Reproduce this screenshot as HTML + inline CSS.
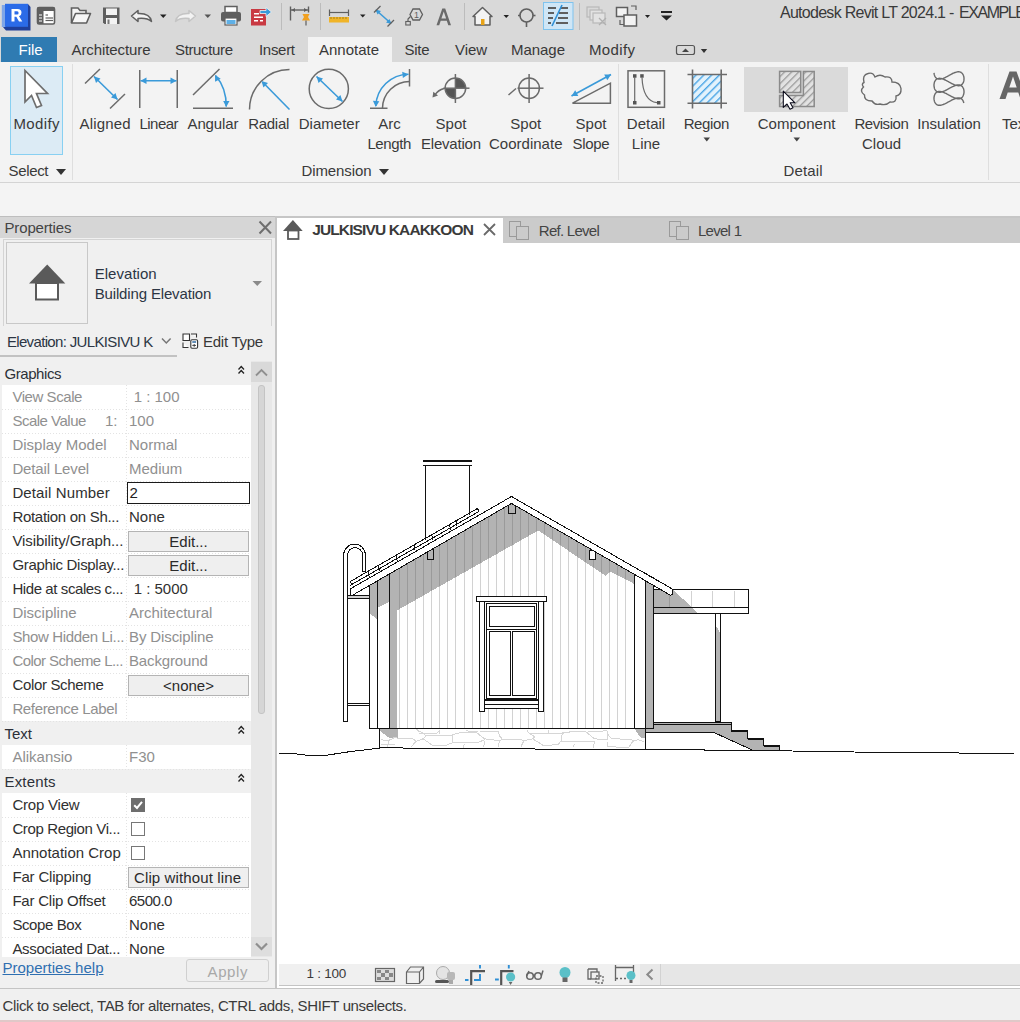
<!DOCTYPE html>
<html><head><meta charset="utf-8">
<style>
*{margin:0;padding:0;box-sizing:border-box}
html,body{width:1020px;height:1022px;overflow:hidden;background:#f0f0f0;font-family:"Liberation Sans",sans-serif;color:#222}
.a{position:absolute}
.t{position:absolute;white-space:nowrap;line-height:1}
svg{position:absolute;overflow:visible}
</style></head><body>
<div class="a" style="left:0px;top:0px;width:1020px;height:62px;background:#d9d9d9;"></div>
<div class="a" style="left:0px;top:62px;width:1020px;height:120px;background:#f3f3f3;"></div>
<div class="a" style="left:0px;top:182px;width:1020px;height:1px;background:#d4d4d4;"></div>
<div class="a" style="left:0px;top:183px;width:1020px;height:33px;background:#f4f4f4;"></div>
<div class="a" style="left:1px;top:37px;width:56px;height:25px;background:#2f7bb2;"></div>
<div class="t" style="left:18.5px;top:42.30px;font-size:15px;color:#fff;">File</div>
<div class="a" style="left:308px;top:37px;width:84px;height:25px;background:#f3f3f3;"></div>
<div class="t" style="left:71.5px;top:42.30px;font-size:15px;color:#383838;letter-spacing:-0.095px;">Architecture</div>
<div class="t" style="left:175px;top:42.30px;font-size:15px;color:#383838;letter-spacing:-0.359px;">Structure</div>
<div class="t" style="left:259px;top:42.30px;font-size:15px;color:#383838;letter-spacing:-0.306px;">Insert</div>
<div class="t" style="left:319px;top:42.30px;font-size:15px;color:#383838;">Annotate</div>
<div class="t" style="left:404.5px;top:42.30px;font-size:15px;color:#383838;letter-spacing:-0.281px;">Site</div>
<div class="t" style="left:455px;top:42.30px;font-size:15px;color:#383838;letter-spacing:-0.078px;">View</div>
<div class="t" style="left:511px;top:42.30px;font-size:15px;color:#383838;letter-spacing:-0.044px;">Manage</div>
<div class="t" style="left:589px;top:42.30px;font-size:15px;color:#383838;letter-spacing:0.362px;">Modify</div>
<div class="t" style="left:780px;top:4.95px;font-size:16px;color:#3a3a3a;letter-spacing:-0.723px;">Autodesk Revit LT 2024.1 -</div>
<div class="t" style="left:959px;top:4.95px;font-size:16px;color:#3a3a3a;letter-spacing:-1.432px;">EXAMPLE</div>
<svg style="left:0;top:0" width="1020" height="62"><rect x="676.5" y="45.5" width="18" height="9" rx="2" fill="none" stroke="#555" stroke-width="1.2"/><path d="M682 52 L685.5 48.5 L689 52Z" fill="#444"/><path d="M700.8 49 L707.2 49 L704 53Z" fill="#333"/></svg>
<div class="a" style="left:72px;top:64px;width:1px;height:116px;background:#dedede;"></div>
<div class="a" style="left:618px;top:64px;width:1px;height:116px;background:#dedede;"></div>
<div class="a" style="left:988px;top:64px;width:1px;height:116px;background:#dedede;"></div>
<div class="a" style="left:10px;top:66px;width:53px;height:89px;background:#dcebf5;border:1px solid #88d0f2;"></div>
<div class="t" style="left:13.5px;top:115.99px;font-size:15px;color:#3a3a3a;letter-spacing:0.362px;">Modify</div>
<div class="t" style="left:8.5px;top:163.09px;font-size:15px;color:#3a3a3a;letter-spacing:-0.338px;">Select</div>
<div class="t" style="left:301.5px;top:163.09px;font-size:15px;color:#3a3a3a;letter-spacing:-0.107px;">Dimension</div>
<div class="t" style="left:783.5px;top:163.09px;font-size:15px;color:#3a3a3a;letter-spacing:0.131px;">Detail</div>
<svg style="left:0;top:0" width="1020" height="216"><path d="M56 169 L66 169 L61 175Z" fill="#333"/><path d="M379 169 L389 169 L384 175Z" fill="#333"/><path d="M703.5 137.5 L710 137.5 L706.75 141.5Z" fill="#444"/><path d="M793.5 137.5 L800 137.5 L796.75 141.5Z" fill="#444"/></svg>
<div class="t" style="left:79.5px;top:115.99px;font-size:15px;color:#3a3a3a;letter-spacing:0.161px;">Aligned</div>
<div class="t" style="left:139.5px;top:115.99px;font-size:15px;color:#3a3a3a;letter-spacing:-0.541px;">Linear</div>
<div class="t" style="left:187.5px;top:115.99px;font-size:15px;color:#3a3a3a;letter-spacing:-0.117px;">Angular</div>
<div class="t" style="left:248.25px;top:115.99px;font-size:15px;color:#3a3a3a;letter-spacing:-0.303px;">Radial</div>
<div class="t" style="left:298.7px;top:115.99px;font-size:15px;color:#3a3a3a;letter-spacing:0.020px;">Diameter</div>
<div class="t" style="left:378.15px;top:115.99px;font-size:15px;color:#3a3a3a;">Arc</div>
<div class="t" style="left:367.4px;top:135.99px;font-size:15px;color:#3a3a3a;letter-spacing:-0.378px;">Length</div>
<div class="t" style="left:435.5703125px;top:115.99px;font-size:15px;color:#3a3a3a;">Spot</div>
<div class="t" style="left:421.0px;top:135.99px;font-size:15px;color:#3a3a3a;letter-spacing:-0.213px;">Elevation</div>
<div class="t" style="left:510.3203125px;top:115.99px;font-size:15px;color:#3a3a3a;">Spot</div>
<div class="t" style="left:489.0px;top:135.99px;font-size:15px;color:#3a3a3a;letter-spacing:0.012px;">Coordinate</div>
<div class="t" style="left:575.5703125px;top:115.99px;font-size:15px;color:#3a3a3a;">Spot</div>
<div class="t" style="left:572.5px;top:135.99px;font-size:15px;color:#3a3a3a;letter-spacing:-0.340px;">Slope</div>
<div class="t" style="left:631.8203125px;top:135.99px;font-size:15px;color:#3a3a3a;">Line</div>
<div class="t" style="left:626.85px;top:115.99px;font-size:15px;color:#3a3a3a;letter-spacing:-0.009px;">Detail</div>
<div class="t" style="left:683.65px;top:115.99px;font-size:15px;color:#3a3a3a;letter-spacing:-0.366px;">Region</div>
<div class="t" style="left:757.75px;top:115.99px;font-size:15px;color:#3a3a3a;letter-spacing:0.017px;">Component</div>
<div class="t" style="left:862.00625px;top:135.99px;font-size:15px;color:#3a3a3a;">Cloud</div>
<div class="t" style="left:854.45px;top:115.99px;font-size:15px;color:#3a3a3a;letter-spacing:-0.459px;">Revision</div>
<div class="t" style="left:917.15px;top:115.99px;font-size:15px;color:#3a3a3a;letter-spacing:-0.058px;">Insulation</div>
<svg style="left:0;top:0" width="1020" height="216"><path d="M25 70.5 L25 102 L31.5 95.5 L36.5 107.5 L41.5 105.5 L36.5 93.5 L47.5 93.5Z" fill="#fff" stroke="#6e6e6e" stroke-width="1.7" stroke-linejoin="miter"/><line x1="85" y1="83.5" x2="100" y2="69" stroke="#6b6b6b" stroke-width="1.5"/><line x1="110" y1="108.5" x2="125" y2="94" stroke="#6b6b6b" stroke-width="1.5"/><line x1="94" y1="76.5" x2="117.5" y2="99.5" stroke="#3a9ad9" stroke-width="1.6"/><path d="M117.5 99.5 L111.0 97.6 L115.5 93.0Z" fill="#3a9ad9"/><path d="M94.0 76.5 L100.5 78.4 L96.0 83.0Z" fill="#3a9ad9"/><line x1="139.75" y1="70" x2="139.75" y2="108" stroke="#6b6b6b" stroke-width="1.5"/><line x1="177.25" y1="70" x2="177.25" y2="108" stroke="#6b6b6b" stroke-width="1.5"/><line x1="140.5" y1="80.8" x2="176.5" y2="80.8" stroke="#3a9ad9" stroke-width="1.6"/><path d="M176.5 80.8 L170.5 84.0 L170.5 77.6Z" fill="#3a9ad9"/><path d="M140.5 80.8 L146.5 77.6 L146.5 84.0Z" fill="#3a9ad9"/><line x1="193" y1="95" x2="219.5" y2="69" stroke="#6b6b6b" stroke-width="1.5"/><line x1="193" y1="108.25" x2="233" y2="108.25" stroke="#6b6b6b" stroke-width="1.5"/><path d="M215.5 75.5 Q226.5 88 226.2 106.5" fill="none" stroke="#3a9ad9" stroke-width="1.6"/><path d="M215.0 75.0 L220.7 78.7 L215.1 81.8Z" fill="#3a9ad9"/><path d="M226.2 107.0 L223.2 100.9 L229.5 101.1Z" fill="#3a9ad9"/><path d="M249.5 109.5 A40 40 0 0 1 289.5 69.5" fill="none" stroke="#6b6b6b" stroke-width="1.5"/><line x1="289.5" y1="109.5" x2="263" y2="82.5" stroke="#3a9ad9" stroke-width="1.6"/><path d="M261.5 81.0 L268.0 83.0 L263.4 87.5Z" fill="#3a9ad9"/><circle cx="328.8" cy="88.8" r="19.6" fill="none" stroke="#6b6b6b" stroke-width="1.5"/><line x1="316.5" y1="76.5" x2="342.5" y2="101.5" stroke="#3a9ad9" stroke-width="1.6"/><path d="M342.5 101.5 L336.0 99.6 L340.4 95.0Z" fill="#3a9ad9"/><path d="M316.5 76.5 L323.0 78.4 L318.6 83.0Z" fill="#3a9ad9"/><line x1="409.5" y1="69" x2="409.5" y2="86.5" stroke="#6b6b6b" stroke-width="1.5"/><line x1="370" y1="108.25" x2="387.5" y2="108.25" stroke="#6b6b6b" stroke-width="1.5"/><path d="M382.5 108 A27 27 0 0 1 409.5 81.5" fill="none" stroke="#6b6b6b" stroke-width="1.5"/><path d="M375.8 106 A33 33 0 0 1 408.5 74.2" fill="none" stroke="#3a9ad9" stroke-width="1.6"/><path d="M375.8 107.0 L372.9 100.8 L379.3 101.2Z" fill="#3a9ad9"/><path d="M408.5 74.2 L402.9 78.0 L402.2 71.7Z" fill="#3a9ad9"/><path d="M455.4 88.2 L455.4 77.9 A10.3 10.3 0 0 1 465.7 88.2Z" fill="#555"/><path d="M455.4 88.2 L455.4 98.5 A10.3 10.3 0 0 1 445.09999999999997 88.2Z" fill="#555"/><circle cx="455.4" cy="88.2" r="10.3" fill="none" stroke="#6b6b6b" stroke-width="1.5"/><line x1="455.4" y1="74" x2="455.4" y2="103" stroke="#6b6b6b" stroke-width="1.5"/><line x1="443.5" y1="88.2" x2="469.5" y2="88.2" stroke="#6b6b6b" stroke-width="1.5"/><path d="M444 88.5 Q438 90 434.5 95.5" fill="none" stroke="#6b6b6b" stroke-width="1.5"/><path d="M432.5 97.5 L433.3 91.7 L438.0 95.5Z" fill="#6b6b6b"/><circle cx="529.1" cy="88.2" r="10.3" fill="none" stroke="#6b6b6b" stroke-width="1.5"/><line x1="529.1" y1="74" x2="529.1" y2="103" stroke="#6b6b6b" stroke-width="1.5"/><line x1="517.5" y1="88.2" x2="543.5" y2="88.2" stroke="#6b6b6b" stroke-width="1.5"/><line x1="508.5" y1="95" x2="516" y2="88.5" stroke="#6b6b6b" stroke-width="1.5"/><path d="M572.5 103.2 L610.4 103.2 L610.4 83.2Z" fill="none" stroke="#6b6b6b" stroke-width="1.5" stroke-linejoin="miter"/><line x1="571.5" y1="96" x2="611" y2="74.5" stroke="#3a9ad9" stroke-width="1.6"/><path d="M611.0 74.5 L607.3 80.2 L604.2 74.6Z" fill="#3a9ad9"/><path d="M571.5 96.0 L575.2 90.3 L578.3 95.9Z" fill="#3a9ad9"/><rect x="628" y="70.8" width="36.5" height="36.5" fill="none" stroke="#6b6b6b" stroke-width="1.5"/><g fill="#555"><rect x="633" y="74.2" width="3.5" height="3.5"/><rect x="640.2" y="74.2" width="3.5" height="3.5"/><rect x="633" y="101" width="3.5" height="3.5"/><rect x="657" y="101" width="3.5" height="3.5"/></g><line x1="634.7" y1="77" x2="634.7" y2="101" stroke="#6b6b6b" stroke-width="1.2"/><path d="M642 77.5 Q643 101 657 102.7" fill="none" stroke="#6b6b6b" stroke-width="1.2"/><defs><pattern id="hb" width="5.5" height="5.5" patternUnits="userSpaceOnUse" patternTransform="rotate(45)"><rect width="5.5" height="5.5" fill="#e2f2fc"/><rect width="1.4" height="5.5" fill="#4aa6e6"/></pattern><pattern id="hg" width="5" height="5" patternUnits="userSpaceOnUse" patternTransform="rotate(45)"><rect width="5" height="5" fill="#e2e2e2"/><rect width="1.3" height="5" fill="#9a9a9a"/></pattern></defs><rect x="692.5" y="74.5" width="28.7" height="28.7" fill="url(#hb)"/><g stroke="#6b6b6b" stroke-width="1.6"><line x1="692.5" y1="69.5" x2="692.5" y2="108.5"/><line x1="721.2" y1="69.5" x2="721.2" y2="108.5"/><line x1="687.5" y1="74.5" x2="727" y2="74.5"/><line x1="687.5" y1="103.2" x2="727" y2="103.2"/></g><rect x="744" y="67" width="104" height="45" fill="#dadada"/><path d="M803.4 71.4 L814.2 71.4 L814.2 106.4 L779.6 106.4 L779.6 95.4 L803.4 95.4Z" fill="url(#hg)" stroke="#8a8a8a" stroke-width="1.5"/><rect x="779.6" y="71.4" width="21.1" height="21.1" fill="url(#hg)" stroke="#8a8a8a" stroke-width="1.5"/><path d="M783.3 91.2 L783.3 107.4 L787 104 L790 109.3 L793 107.8 L790.2 102.8 L795 102.8Z" fill="#fff" stroke="#0a0a1a" stroke-width="1.1" stroke-linejoin="round"/><path d="M864 82.5 Q862 75 868 73.5 Q873 72 875 77 Q880 73.5 885 77 Q892 76 892 82 Q900 82 901 88.5 Q901.5 95 896 96 Q897 103 890 102 Q886 106 880 104 Q875 105.5 872 101 Q864 101 864.5 95 Q859 91 863.5 87 Q861 84 864 82.5Z" fill="none" stroke="#6b6b6b" stroke-width="1.4"/><polyline points="934.0,72.8 934.1,73.4 934.1,73.9 934.2,74.4 934.4,74.9 934.5,75.4 934.7,75.9 934.9,76.3 935.2,76.7 935.4,77.1 935.7,77.5 936.0,77.8 936.3,78.1 936.7,78.4 937.1,78.6 937.5,78.8 937.9,78.9 938.4,79.0 938.8,79.1 939.3,79.1 939.8,79.1 940.3,79.1 940.9,79.0 941.4,78.9 942.0,78.8 942.6,78.6 943.1,78.4 943.7,78.1 944.4,77.9 945.0,77.6 945.6,77.3 946.2,77.0 946.9,76.6 947.5,76.3 948.2,75.9 948.8,75.6 949.4,75.2 950.1,74.9 950.7,74.5 951.4,74.2 952.0,73.8 952.6,73.5 953.3,73.2 953.9,73.0 954.5,72.7 955.1,72.5 955.7,72.3 956.2,72.1 956.8,72.0 957.3,71.9 957.9,71.8 958.4,71.8 958.9,71.8 959.4,71.9 959.8,71.9 960.3,72.1 960.7,72.2 961.1,72.4 961.4,72.7 961.8,73.0 962.1,73.3 962.4,73.6 962.7,74.0 962.9,74.4 963.2,74.8 963.4,75.3 963.5,75.7 963.7,76.2 963.8,76.7 963.9,77.3 964.0,77.8 964.0,78.3 964.0,78.9 964.0,79.4 963.9,79.9 963.9,80.5 963.8,81.0 963.6,81.5 963.5,82.0 963.3,82.4 963.1,82.9 962.8,83.3 962.6,83.7 962.3,84.0 962.0,84.4 961.6,84.7 961.3,84.9 960.9,85.1 960.5,85.3 960.1,85.5 959.6,85.6 959.1,85.7 958.7,85.7 958.2,85.7 957.6,85.6 957.1,85.6 956.5,85.4 956.0,85.3 955.4,85.1 954.8,84.9 954.2,84.7 953.6,84.4 953.0,84.1 952.4,83.8 951.7,83.5 951.1,83.2 950.4,82.8 949.8,82.5 949.1,82.1 948.5,81.7 947.9,81.4 947.2,81.0 946.6,80.7 945.9,80.4 945.3,80.0 944.7,79.8 944.1,79.5 943.5,79.2 942.9,79.0 942.3,78.8 941.7,78.6 941.2,78.5 940.6,78.4 940.1,78.4 939.6,78.3 939.1,78.4 938.6,78.4 938.2,78.5 937.7,78.6 937.3,78.8 936.9,79.0 936.5,79.2 936.2,79.5 935.9,79.8 935.6,80.2 935.3,80.6 935.0,81.0 934.8,81.4 934.6,81.8 934.4,82.3 934.3,82.8 934.2,83.3 934.1,83.8 934.0,84.4 934.0,84.9 934.0,85.4 934.0,86.0 934.1,86.5 934.2,87.0 934.3,87.6 934.4,88.1 934.5,88.5 934.7,89.0 934.9,89.4 935.2,89.9 935.5,90.2 935.7,90.6 936.1,90.9 936.4,91.2 936.8,91.5 937.1,91.7 937.5,91.9 938.0,92.0 938.4,92.1 938.9,92.2 939.4,92.2 939.9,92.2 940.4,92.2 940.9,92.1 941.5,92.0 942.1,91.8 942.6,91.6 943.2,91.4 943.8,91.2 944.4,90.9 945.1,90.6 945.7,90.3 946.3,90.0 947.0,89.7 947.6,89.3 948.3,89.0 948.9,88.6 949.5,88.2 950.2,87.9 950.8,87.5 951.5,87.2 952.1,86.9 952.7,86.6 953.4,86.3 954.0,86.0 954.6,85.8 955.2,85.5 955.8,85.3 956.3,85.2 956.9,85.0 957.4,85.0 957.9,84.9 958.5,84.9 959.0,84.9 959.4,84.9 959.9,85.0 960.3,85.2 960.7,85.3 961.1,85.6 961.5,85.8 961.8,86.1 962.2,86.4 962.5,86.7 962.7,87.1 963.0,87.5 963.2,88.0 963.4,88.4 963.6,88.9 963.7,89.4 963.8,89.9 963.9,90.4 964.0,90.9 964.0,91.5 964.0,92.0 964.0,92.6 963.9,93.1 963.8,93.6 963.7,94.1 963.6,94.6 963.4,95.1 963.2,95.6 963.0,96.0 962.8,96.4 962.5,96.8 962.2,97.2 961.9,97.5 961.6,97.8 961.2,98.0 960.8,98.2 960.4,98.4 960.0,98.6 959.5,98.7 959.1,98.7 958.6,98.8 958.1,98.7 957.6,98.7 957.0,98.6 956.5,98.5 955.9,98.3 955.3,98.2 954.7,97.9 954.1,97.7 953.5,97.4 952.9,97.1 952.3,96.8 951.6,96.5 951.0,96.2 950.3,95.8 949.7,95.5 949.1,95.1 948.4,94.8 947.8,94.4 947.1,94.1 946.5,93.7 945.9,93.4 945.2,93.1 944.6,92.8 944.0,92.5 943.4,92.3 942.8,92.1 942.2,91.9 941.6,91.7 941.1,91.6 940.5,91.5 940.0,91.4 939.5,91.4 939.0,91.4 938.5,91.5 938.1,91.6 937.7,91.7 937.2,91.9 936.9,92.1 936.5,92.4 936.1,92.6 935.8,93.0 935.5,93.3 935.3,93.7 935.0,94.1 934.8,94.5 934.6,95.0 934.4,95.5 934.3,96.0 934.2,96.5 934.1,97.0 934.0,97.5 934.0,98.1 934.0,98.6 934.0,99.1 934.1,99.7 934.2,100.2 934.3,100.7 934.4,101.2 934.6,101.7 934.8,102.1 935.0,102.6 935.2,103.0 935.5,103.4 935.8,103.7 936.1,104.0 936.4,104.3 936.8,104.6 937.2,104.8 937.6,105.0 938.0,105.1 938.5,105.2 939.0,105.3 939.5,105.3 940.0,105.3 940.5,105.2 941.0,105.1 941.6,105.0 942.1,104.9 942.7,104.7 943.3,104.5 943.9,104.2 944.5,104.0 945.2,103.7 945.8,103.4 946.4,103.0 947.1,102.7 947.7,102.3 948.3,102.0 949.0,101.6 949.6,101.3 950.3,100.9 950.9,100.6 951.6,100.2 952.2,99.9 952.8,99.6 953.4,99.3 954.1,99.0 954.7,98.8 955.3,98.6 955.8,98.4 956.4,98.2 957.0,98.1 957.5,98.0 958.0,98.0 958.5,98.0 959.0,98.0 959.5,98.0 959.9,98.1 960.4,98.3 960.8,98.5 961.2,98.7 961.5,98.9 961.9,99.2 962.2,99.5 962.5,99.9 962.8,100.3 963.0,100.7 963.2,101.1 963.4,101.6 963.6,102.0 963.7,102.5 963.8,103.0" fill="none" stroke="#6b6b6b" stroke-width="1.4"/><path d="M999.5 99 L1009.5 71.5 L1016.5 71.5 L1026.5 99 L1020.5 99 L1018.3 92.5 L1007.7 92.5 L1005.5 99Z M1009.3 87.5 L1016.7 87.5 L1013 76.5Z" fill="#666" fill-rule="evenodd"/></svg>
<svg style="left:0;top:0" width="1020" height="37"><path d="M5 5 L28 4 L30.5 7 L30.5 30.5 L6 30.5 L3 27Z" fill="#1f3f9a"/><rect x="1.8" y="5" width="4" height="22" fill="#7fa6e8"/><rect x="5" y="3.8" width="23" height="23" fill="#2b6be8"/><path d="M11.5 21.5 L11.5 9 L17.5 9 Q21.5 9 21.5 12.7 Q21.5 15.5 19 16.2 L22.3 21.5 L19 21.5 L16.3 16.8 L14.5 16.8 L14.5 21.5Z M14.5 11.3 L14.5 14.5 L17.2 14.5 Q18.6 14.5 18.6 12.9 Q18.6 11.3 17.2 11.3Z" fill="#fff" fill-rule="evenodd"/><rect x="37.5" y="7.5" width="17" height="16.5" rx="1.5" fill="#fff" stroke="#5f5f5f" stroke-width="1.6"/><rect x="37.5" y="7.5" width="17" height="3.5" fill="#5f5f5f"/><rect x="37.5" y="11" width="6" height="13" fill="#5f5f5f"/><g stroke="#fff" stroke-width="1"><line x1="39" y1="15" x2="42" y2="15"/><line x1="39" y1="18" x2="42" y2="18"/><line x1="39" y1="21" x2="42" y2="21"/></g><g stroke="#5f5f5f" stroke-width="1.2"><line x1="45.5" y1="15" x2="48" y2="15"/><line x1="45.5" y1="18" x2="53" y2="18"/><line x1="45.5" y1="20.5" x2="53" y2="20.5"/></g><path d="M71.5 23 L71.5 8 L78 8 L80 10.5 L86 10.5 L86 13" fill="#f4f4f4" stroke="#5f5f5f" stroke-width="1.6"/><path d="M71.5 23 L75.5 13.5 L90.5 13.5 L86.5 23Z" fill="#f6f6f6" stroke="#5f5f5f" stroke-width="1.6" stroke-linejoin="round"/><path d="M103 7.5 L119.5 7.5 L119.5 24 L104.5 24 L103 22.5Z" fill="#5f5f5f"/><rect x="106" y="8.5" width="11" height="6.5" fill="#f3f3f3"/><rect x="106" y="18" width="11" height="6" fill="#f3f3f3"/><rect x="107.5" y="19.5" width="2" height="4.5" fill="#777"/><path d="M131.5 16 L138 10.5 L138 13.5 Q150 13 151.5 21.5 Q147 17.5 138 18.5 L138 21.5Z" fill="#f3f3f3" stroke="#5f5f5f" stroke-width="1.5" stroke-linejoin="round"/><path d="M160 14.5 L166.5 14.5 L163.25 18Z" fill="#222"/><path d="M195.5 16 L189 10.5 L189 13.5 Q177 13 175.5 21.5 Q180 17.5 189 18.5 L189 21.5Z" fill="#f3f3f3" stroke="#c4c4c4" stroke-width="1.5" stroke-linejoin="round"/><path d="M204.5 14.5 L211 14.5 L207.75 18Z" fill="#555"/><rect x="225" y="6.5" width="12" height="6" fill="#fff" stroke="#5f5f5f" stroke-width="1.5"/><rect x="221" y="12" width="20" height="9.5" rx="2" fill="#5f5f5f"/><rect x="225" y="18" width="12" height="7" fill="#fff" stroke="#5f5f5f" stroke-width="1.2"/><rect x="226.5" y="20" width="9" height="4" fill="#5fb0e6"/><rect x="251" y="9" width="15" height="16.5" fill="#c93a43"/><g fill="#fff"><rect x="254" y="13" width="5" height="1.5"/><rect x="254" y="16.5" width="9" height="1.5"/><rect x="254" y="20" width="4" height="1.5"/><rect x="260" y="20" width="3" height="1.5"/></g><path d="M260 10.5 L266 10.5 L266 7.5 L271.5 12 L266 16.5 L266 13.5 L260 13.5Z" fill="#3a9ad9" stroke="#f3f3f3" stroke-width="0.8"/><line x1="281.5" y1="3" x2="281.5" y2="30" stroke="#bcbcbc"/><line x1="320.5" y1="3" x2="320.5" y2="30" stroke="#bcbcbc"/><line x1="464.5" y1="3" x2="464.5" y2="30" stroke="#bcbcbc"/><line x1="579.5" y1="3" x2="579.5" y2="30" stroke="#bcbcbc"/><g stroke="#5f5f5f" stroke-width="1.4"><line x1="290.5" y1="6.5" x2="290.5" y2="20.5"/><line x1="308.5" y1="6.5" x2="308.5" y2="12.5"/><line x1="291" y1="10" x2="308" y2="10"/></g><path d="M291.5 10 L295 8 L295 12Z M307.5 10 L304 8 L304 12Z" fill="#5f5f5f"/><path d="M302.5 14 L309.5 14 L308 17 L310 20.5 L302 20.5 L304 17Z" fill="#f0a020"/><line x1="306" y1="20.5" x2="306" y2="25.5" stroke="#666" stroke-width="1.3"/><g stroke="#5f5f5f" stroke-width="1.2"><line x1="329.5" y1="9.5" x2="329.5" y2="16"/><line x1="348.5" y1="9.5" x2="348.5" y2="16"/><line x1="330" y1="12.5" x2="348" y2="12.5"/></g><rect x="329" y="17" width="20" height="5.5" fill="#f0b428"/><g stroke="#8a6a10" stroke-width="0.7"><line x1="331" y1="17" x2="331" y2="19"/><line x1="334" y1="17" x2="334" y2="19"/><line x1="337" y1="17" x2="337" y2="19"/><line x1="340" y1="17" x2="340" y2="19"/><line x1="343" y1="17" x2="343" y2="19"/><line x1="346" y1="17" x2="346" y2="19"/></g><path d="M360 14.5 L365.5 14.5 L362.75 17.5Z" fill="#222"/><line x1="376.5" y1="10.5" x2="390.5" y2="23" stroke="#3a9ad9" stroke-width="1.6"/><path d="M375.5 9.5 L381 11 L377.5 14.5Z M391.5 24 L386 22.5 L389.5 19Z" fill="#3a9ad9"/><g stroke="#5f5f5f" stroke-width="1.3"><line x1="374" y1="12.5" x2="380.5" y2="6"/><line x1="387.5" y1="26.5" x2="394" y2="20"/></g><path d="M413 9 L419.5 9 L422.5 14.5 L419.5 20 L413 20 L410 14.5Z" fill="none" stroke="#5f5f5f" stroke-width="1.3"/><text x="414" y="18.3" font-size="9" font-family="Liberation Sans" fill="#5f5f5f">1</text><path d="M410.5 16.5 L408 19 L408 21.5" fill="none" stroke="#5f5f5f" stroke-width="1.2"/><rect x="405.8" y="21.5" width="4.5" height="3.5" fill="none" stroke="#5f5f5f" stroke-width="1.1"/><path d="M436.5 25.3 L442.3 8.5 L445.2 8.5 L451 25.3 L448.3 25.3 L446.8 20.8 L440.7 20.8 L439.2 25.3Z M441.4 18.6 L446.1 18.6 L443.75 11.5Z" fill="#6a6a6a" fill-rule="evenodd"/><path d="M473 16.5 L482.5 7.5 L492 16.5 L490 16.5 L490 25 L475 25 L475 16.5Z" fill="#f3f3f3" stroke="#5f5f5f" stroke-width="1.5" stroke-linejoin="round"/><rect x="481" y="19" width="3.5" height="6" fill="#e8a317"/><path d="M503.5 15 L509 15 L506.25 18Z" fill="#222"/><circle cx="526.5" cy="15.5" r="6.5" fill="none" stroke="#5f5f5f" stroke-width="1.6"/><line x1="518" y1="15.5" x2="520" y2="15.5" stroke="#5f5f5f" stroke-width="1.6"/><line x1="533" y1="15.5" x2="535.5" y2="15.5" stroke="#5f5f5f" stroke-width="1.6"/><line x1="526.5" y1="22" x2="526.5" y2="27" stroke="#5f5f5f" stroke-width="1.6"/><rect x="543.5" y="2.5" width="29.5" height="27" fill="#cfe6f6" stroke="#7fc3ee" stroke-width="1"/><g stroke="#5f5f5f" stroke-width="2"><line x1="548" y1="8" x2="556" y2="8"/><line x1="561" y1="8" x2="568" y2="8"/><line x1="548" y1="13" x2="554" y2="13"/><line x1="559" y1="13" x2="568" y2="13"/><line x1="548" y1="18" x2="553" y2="18"/><line x1="558" y1="18" x2="568" y2="18"/><line x1="548" y1="23" x2="551" y2="23"/><line x1="556" y1="23" x2="568" y2="23"/></g><line x1="552" y1="26" x2="562" y2="5" stroke="#2f8fd5" stroke-width="1.6"/><g fill="none" stroke="#b8b8b8" stroke-width="1.2"><rect x="587" y="7" width="12" height="10"/><rect x="590" y="10" width="12" height="10" fill="#e2e2e2"/><rect x="593" y="13" width="12" height="10" fill="#e2e2e2"/></g><path d="M599 18 L606 25 M606 18 L599 25" stroke="#b0b0b0" stroke-width="1.3"/><g fill="#f3f3f3" stroke="#5f5f5f" stroke-width="1.5"><rect x="616.5" y="7.5" width="11" height="9"/><rect x="624" y="15" width="12.5" height="11"/></g><path d="M631 6 L636 6 L636 10 M620 20 L620 24.5 L624 24.5" fill="none" stroke="#5f5f5f" stroke-width="1.2"/><path d="M645 15 L650 15 L647.5 18Z" fill="#222"/><rect x="661" y="11" width="11" height="2" fill="#222"/><path d="M661 15.5 L672 15.5 L666.5 20.5Z" fill="#222"/></svg>
<div class="a" style="left:0px;top:216px;width:275px;height:1px;background:#bebebe;"></div>
<div class="a" style="left:0px;top:217px;width:275px;height:21px;background:#d6d6d6;"></div>
<div class="t" style="left:4.5px;top:220.29px;font-size:15px;color:#444;letter-spacing:-0.153px;">Properties</div>
<svg style="left:0;top:0" width="280" height="1022"><path d="M259.5 221.5 L271 233.5 M271 221.5 L259.5 233.5" stroke="#6e6e6e" stroke-width="2"/></svg>
<div class="a" style="left:0px;top:238px;width:275px;height:750px;background:#f0f0f0;"></div>
<div class="a" style="left:3px;top:239px;width:269px;height:87px;background:#f0f0f0;border:1px solid #d4d4d4;border-bottom:none"></div>
<div class="a" style="left:6px;top:242px;width:82px;height:82px;background:#f0f0f0;border:1px solid #c8c8c8"></div>
<svg style="left:0;top:0" width="280" height="400"><path d="M29 283.5 L47.2 264.5 L65.3 283.5Z" fill="#5a5a5a"/><rect x="36" y="283" width="22" height="16.5" fill="#fff" stroke="#5a5a5a" stroke-width="2"/><path d="M252.5 281 L262 281 L257.25 286Z" fill="#8a8a8a"/><path d="M162 338.5 L166.3 343 L170.6 338.5" fill="none" stroke="#777" stroke-width="1.5"/><g fill="#fff" stroke="#333" stroke-width="1.1"><path d="M183 334 L189.5 334 L189.5 340.5 L183 340.5Z"/><path d="M191 334 L196.5 334 L196.5 337.5"/><path d="M183 342.5 L183 347.5 L188.5 347.5"/><rect x="190.8" y="339.7" width="6.8" height="8.6" rx="1.2"/></g><rect x="192.3" y="341.3" width="3.8" height="1.4" fill="#1f5f9a"/><path d="M192.3 345.4 L196 345.4 M194.2 344 L194.2 346.8" stroke="#333" stroke-width="0.9"/></svg>
<div class="t" style="left:94.7px;top:266.10px;font-size:15px;color:#2c3644;letter-spacing:0.037px;">Elevation</div>
<div class="t" style="left:94.7px;top:285.90px;font-size:15px;color:#2c3644;letter-spacing:-0.149px;">Building Elevation</div>
<div class="t" style="left:6.9px;top:334.19px;font-size:15px;color:#2c3644;letter-spacing:-0.655px;">Elevation: JULKISIVU K</div>
<div class="t" style="left:203.1px;top:334.19px;font-size:15px;color:#383838;letter-spacing:-0.283px;">Edit Type</div>
<div class="a" style="left:0px;top:355px;width:177px;height:2px;background:#c2c2c2;"></div>
<div class="a" style="left:251px;top:361px;width:21px;height:596px;background:#e8e8e8;"></div>
<div class="a" style="left:251px;top:362px;width:21px;height:20px;background:#d9d9d9;"></div>
<div class="a" style="left:251px;top:937px;width:21px;height:19px;background:#dedede;"></div>
<div class="a" style="left:258px;top:385px;width:7px;height:329px;background:#d6d6d6;border:1px solid #c4c4c4;border-radius:3px"></div>
<svg style="left:0;top:0" width="280" height="1022"><path d="M256 375.5 L261.5 370 L267 375.5" fill="none" stroke="#8f8f8f" stroke-width="1.8"/><path d="M256 943.5 L261.5 949 L267 943.5" fill="none" stroke="#8f8f8f" stroke-width="2.2"/></svg>
<div class="a" style="left:2px;top:361px;width:249px;height:24px;background:#f0f0f0;"></div>
<div class="t" style="left:4.5px;top:365.60px;font-size:15px;color:#2c3038;letter-spacing:-0.433px;">Graphics</div>
<div class="a" style="left:2px;top:385px;width:249px;height:24px;background:#fff;"></div>
<div class="t" style="left:12.4px;top:389.00px;font-size:15px;color:#909090;letter-spacing:-0.436px;">View Scale</div>
<div class="t" style="left:133.7px;top:389.00px;font-size:15px;color:#909090;">1 : 100</div>
<div class="a" style="left:2px;top:409px;width:249px;height:24px;background:#fff;"></div>
<div class="t" style="left:12.4px;top:413.00px;font-size:15px;color:#909090;letter-spacing:-0.494px;">Scale Value</div>
<div class="t" style="left:105px;top:413.00px;font-size:15px;color:#909090;">1:</div>
<div class="t" style="left:129px;top:413.00px;font-size:15px;color:#909090;">100</div>
<div class="a" style="left:2px;top:433px;width:249px;height:24px;background:#fff;"></div>
<div class="t" style="left:12.4px;top:437.00px;font-size:15px;color:#909090;">Display Model</div>
<div class="t" style="left:129px;top:437.00px;font-size:15px;color:#909090;">Normal</div>
<div class="a" style="left:2px;top:457px;width:249px;height:24px;background:#fff;"></div>
<div class="t" style="left:12.4px;top:461.00px;font-size:15px;color:#909090;letter-spacing:-0.143px;">Detail Level</div>
<div class="t" style="left:129px;top:461.00px;font-size:15px;color:#909090;">Medium</div>
<div class="a" style="left:2px;top:481px;width:249px;height:24px;background:#fff;"></div>
<div class="t" style="left:12.4px;top:485.00px;font-size:15px;color:#303030;letter-spacing:0.127px;">Detail Number</div>
<div class="a" style="left:127px;top:482px;width:123px;height:22px;background:#fff;border:1px solid #1a1a1a"></div>
<div class="t" style="left:129.5px;top:485.00px;font-size:15px;color:#222;">2</div>
<div class="a" style="left:2px;top:505px;width:249px;height:24px;background:#fff;"></div>
<div class="t" style="left:12.4px;top:509.00px;font-size:15px;color:#303030;letter-spacing:-0.298px;">Rotation on Sh...</div>
<div class="t" style="left:129px;top:509.00px;font-size:15px;color:#303030;">None</div>
<div class="a" style="left:2px;top:529px;width:249px;height:24px;background:#fff;"></div>
<div class="t" style="left:12.4px;top:533.00px;font-size:15px;color:#303030;letter-spacing:-0.071px;">Visibility/Graph...</div>
<div class="a" style="left:128px;top:531px;width:121px;height:21px;background:#efefef;border:1px solid #b4b4b4"></div>
<div class="t" style="left:169.3203125px;top:533.79px;font-size:15px;color:#2a2a2a;">Edit...</div>
<div class="a" style="left:2px;top:553px;width:249px;height:24px;background:#fff;"></div>
<div class="t" style="left:12.4px;top:557.00px;font-size:15px;color:#303030;letter-spacing:-0.311px;">Graphic Display...</div>
<div class="a" style="left:128px;top:555px;width:121px;height:21px;background:#efefef;border:1px solid #b4b4b4"></div>
<div class="t" style="left:169.3203125px;top:557.79px;font-size:15px;color:#2a2a2a;">Edit...</div>
<div class="a" style="left:2px;top:577px;width:249px;height:24px;background:#fff;"></div>
<div class="t" style="left:12.4px;top:581.00px;font-size:15px;color:#303030;letter-spacing:-0.411px;">Hide at scales c...</div>
<div class="t" style="left:133.7px;top:581.00px;font-size:15px;color:#303030;">1 : 5000</div>
<div class="a" style="left:2px;top:601px;width:249px;height:24px;background:#fff;"></div>
<div class="t" style="left:12.4px;top:605.00px;font-size:15px;color:#909090;">Discipline</div>
<div class="t" style="left:129px;top:605.00px;font-size:15px;color:#909090;">Architectural</div>
<div class="a" style="left:2px;top:625px;width:249px;height:24px;background:#fff;"></div>
<div class="t" style="left:12.4px;top:629.00px;font-size:15px;color:#909090;letter-spacing:-0.349px;">Show Hidden Li...</div>
<div class="t" style="left:129px;top:629.00px;font-size:15px;color:#909090;letter-spacing:-0.112px;">By Discipline</div>
<div class="a" style="left:2px;top:649px;width:249px;height:24px;background:#fff;"></div>
<div class="t" style="left:12.4px;top:653.00px;font-size:15px;color:#909090;letter-spacing:-0.567px;">Color Scheme L...</div>
<div class="t" style="left:129px;top:653.00px;font-size:15px;color:#909090;letter-spacing:-0.140px;">Background</div>
<div class="a" style="left:2px;top:673px;width:249px;height:24px;background:#fff;"></div>
<div class="t" style="left:12.4px;top:677.00px;font-size:15px;color:#303030;letter-spacing:-0.332px;">Color Scheme</div>
<div class="a" style="left:128px;top:675px;width:121px;height:21px;background:#efefef;border:1px solid #b4b4b4"></div>
<div class="t" style="left:163.046875px;top:677.79px;font-size:15px;color:#2a2a2a;">&lt;none&gt;</div>
<div class="a" style="left:2px;top:697px;width:249px;height:24px;background:#fff;"></div>
<div class="t" style="left:12.4px;top:701.00px;font-size:15px;color:#909090;letter-spacing:-0.357px;">Reference Label</div>
<div class="a" style="left:2px;top:721px;width:249px;height:24px;background:#f0f0f0;"></div>
<div class="t" style="left:4.5px;top:725.59px;font-size:15px;color:#2c3038;">Text</div>
<div class="a" style="left:2px;top:745px;width:249px;height:24px;background:#fff;"></div>
<div class="t" style="left:12.4px;top:749.00px;font-size:15px;color:#909090;">Alikansio</div>
<div class="t" style="left:129px;top:749.00px;font-size:15px;color:#909090;">F30</div>
<div class="a" style="left:2px;top:769px;width:249px;height:24px;background:#f0f0f0;"></div>
<div class="t" style="left:4.5px;top:773.59px;font-size:15px;color:#2c3038;letter-spacing:0.161px;">Extents</div>
<div class="a" style="left:2px;top:793px;width:249px;height:24px;background:#fff;"></div>
<div class="t" style="left:12.4px;top:797.00px;font-size:15px;color:#303030;letter-spacing:-0.203px;">Crop View</div>
<div class="a" style="left:131px;top:798px;width:14px;height:14px;background:#6e6e6e;"></div>
<div class="a" style="left:2px;top:817px;width:249px;height:24px;background:#fff;"></div>
<div class="t" style="left:12.4px;top:821.00px;font-size:15px;color:#303030;letter-spacing:-0.373px;">Crop Region Vi...</div>
<div class="a" style="left:131px;top:822px;width:14px;height:14px;background:#fff;border:1px solid #777"></div>
<div class="a" style="left:2px;top:841px;width:249px;height:24px;background:#fff;"></div>
<div class="t" style="left:12.4px;top:845.00px;font-size:15px;color:#303030;">Annotation Crop</div>
<div class="a" style="left:131px;top:846px;width:14px;height:14px;background:#fff;border:1px solid #777"></div>
<div class="a" style="left:2px;top:865px;width:249px;height:24px;background:#fff;"></div>
<div class="t" style="left:12.4px;top:869.00px;font-size:15px;color:#303030;letter-spacing:-0.169px;">Far Clipping</div>
<div class="a" style="left:128px;top:867px;width:121px;height:21px;background:#efefef;border:1px solid #b4b4b4"></div>
<div class="t" style="left:134px;top:869.79px;font-size:15px;color:#2a2a2a;letter-spacing:0.122px;">Clip without line</div>
<div class="a" style="left:2px;top:889px;width:249px;height:24px;background:#fff;"></div>
<div class="t" style="left:12.4px;top:893.00px;font-size:15px;color:#303030;letter-spacing:-0.224px;">Far Clip Offset</div>
<div class="t" style="left:129px;top:893.00px;font-size:15px;color:#303030;letter-spacing:-0.498px;">6500.0</div>
<div class="a" style="left:2px;top:913px;width:249px;height:24px;background:#fff;"></div>
<div class="t" style="left:12.4px;top:917.00px;font-size:15px;color:#303030;letter-spacing:-0.393px;">Scope Box</div>
<div class="t" style="left:129px;top:917.00px;font-size:15px;color:#303030;">None</div>
<div class="a" style="left:2px;top:937px;width:249px;height:24px;background:#fff;"></div>
<div class="t" style="left:12.4px;top:941.00px;font-size:15px;color:#303030;letter-spacing:-0.338px;">Associated Dat...</div>
<div class="t" style="left:129px;top:941.00px;font-size:15px;color:#303030;">None</div>
<svg style="left:0;top:0" width="280" height="1022"><path d="M238.5 369.5 L241.25 366.5 L244 369.5 M238.5 373.5 L241.25 370.5 L244 373.5" fill="none" stroke="#222" stroke-width="1.3"/><line x1="2" y1="409.5" x2="251" y2="409.5" stroke="#e3e3e3" stroke-dasharray="1 2"/><line x1="126.5" y1="385" x2="126.5" y2="409" stroke="#e3e3e3" stroke-dasharray="1 2"/><line x1="2" y1="433.5" x2="251" y2="433.5" stroke="#e3e3e3" stroke-dasharray="1 2"/><line x1="126.5" y1="409" x2="126.5" y2="433" stroke="#e3e3e3" stroke-dasharray="1 2"/><line x1="2" y1="457.5" x2="251" y2="457.5" stroke="#e3e3e3" stroke-dasharray="1 2"/><line x1="126.5" y1="433" x2="126.5" y2="457" stroke="#e3e3e3" stroke-dasharray="1 2"/><line x1="2" y1="481.5" x2="251" y2="481.5" stroke="#e3e3e3" stroke-dasharray="1 2"/><line x1="126.5" y1="457" x2="126.5" y2="481" stroke="#e3e3e3" stroke-dasharray="1 2"/><line x1="2" y1="505.5" x2="251" y2="505.5" stroke="#e3e3e3" stroke-dasharray="1 2"/><line x1="126.5" y1="481" x2="126.5" y2="505" stroke="#e3e3e3" stroke-dasharray="1 2"/><line x1="2" y1="529.5" x2="251" y2="529.5" stroke="#e3e3e3" stroke-dasharray="1 2"/><line x1="126.5" y1="505" x2="126.5" y2="529" stroke="#e3e3e3" stroke-dasharray="1 2"/><line x1="2" y1="553.5" x2="251" y2="553.5" stroke="#e3e3e3" stroke-dasharray="1 2"/><line x1="126.5" y1="529" x2="126.5" y2="553" stroke="#e3e3e3" stroke-dasharray="1 2"/><line x1="2" y1="577.5" x2="251" y2="577.5" stroke="#e3e3e3" stroke-dasharray="1 2"/><line x1="126.5" y1="553" x2="126.5" y2="577" stroke="#e3e3e3" stroke-dasharray="1 2"/><line x1="2" y1="601.5" x2="251" y2="601.5" stroke="#e3e3e3" stroke-dasharray="1 2"/><line x1="126.5" y1="577" x2="126.5" y2="601" stroke="#e3e3e3" stroke-dasharray="1 2"/><line x1="2" y1="625.5" x2="251" y2="625.5" stroke="#e3e3e3" stroke-dasharray="1 2"/><line x1="126.5" y1="601" x2="126.5" y2="625" stroke="#e3e3e3" stroke-dasharray="1 2"/><line x1="2" y1="649.5" x2="251" y2="649.5" stroke="#e3e3e3" stroke-dasharray="1 2"/><line x1="126.5" y1="625" x2="126.5" y2="649" stroke="#e3e3e3" stroke-dasharray="1 2"/><line x1="2" y1="673.5" x2="251" y2="673.5" stroke="#e3e3e3" stroke-dasharray="1 2"/><line x1="126.5" y1="649" x2="126.5" y2="673" stroke="#e3e3e3" stroke-dasharray="1 2"/><line x1="2" y1="697.5" x2="251" y2="697.5" stroke="#e3e3e3" stroke-dasharray="1 2"/><line x1="126.5" y1="673" x2="126.5" y2="697" stroke="#e3e3e3" stroke-dasharray="1 2"/><line x1="2" y1="721.5" x2="251" y2="721.5" stroke="#e3e3e3" stroke-dasharray="1 2"/><line x1="126.5" y1="697" x2="126.5" y2="721" stroke="#e3e3e3" stroke-dasharray="1 2"/><path d="M238.5 729.5 L241.25 726.5 L244 729.5 M238.5 733.5 L241.25 730.5 L244 733.5" fill="none" stroke="#222" stroke-width="1.3"/><line x1="2" y1="769.5" x2="251" y2="769.5" stroke="#e3e3e3" stroke-dasharray="1 2"/><line x1="126.5" y1="745" x2="126.5" y2="769" stroke="#e3e3e3" stroke-dasharray="1 2"/><path d="M238.5 777.5 L241.25 774.5 L244 777.5 M238.5 781.5 L241.25 778.5 L244 781.5" fill="none" stroke="#222" stroke-width="1.3"/><path d="M134.2 805.2 L137 808 L142 801.8" fill="none" stroke="#fff" stroke-width="2"/><line x1="2" y1="817.5" x2="251" y2="817.5" stroke="#e3e3e3" stroke-dasharray="1 2"/><line x1="126.5" y1="793" x2="126.5" y2="817" stroke="#e3e3e3" stroke-dasharray="1 2"/><line x1="2" y1="841.5" x2="251" y2="841.5" stroke="#e3e3e3" stroke-dasharray="1 2"/><line x1="126.5" y1="817" x2="126.5" y2="841" stroke="#e3e3e3" stroke-dasharray="1 2"/><line x1="2" y1="865.5" x2="251" y2="865.5" stroke="#e3e3e3" stroke-dasharray="1 2"/><line x1="126.5" y1="841" x2="126.5" y2="865" stroke="#e3e3e3" stroke-dasharray="1 2"/><line x1="2" y1="889.5" x2="251" y2="889.5" stroke="#e3e3e3" stroke-dasharray="1 2"/><line x1="126.5" y1="865" x2="126.5" y2="889" stroke="#e3e3e3" stroke-dasharray="1 2"/><line x1="2" y1="913.5" x2="251" y2="913.5" stroke="#e3e3e3" stroke-dasharray="1 2"/><line x1="126.5" y1="889" x2="126.5" y2="913" stroke="#e3e3e3" stroke-dasharray="1 2"/><line x1="2" y1="937.5" x2="251" y2="937.5" stroke="#e3e3e3" stroke-dasharray="1 2"/><line x1="126.5" y1="913" x2="126.5" y2="937" stroke="#e3e3e3" stroke-dasharray="1 2"/><line x1="2" y1="961.5" x2="251" y2="961.5" stroke="#e3e3e3" stroke-dasharray="1 2"/><line x1="126.5" y1="937" x2="126.5" y2="961" stroke="#e3e3e3" stroke-dasharray="1 2"/></svg>
<div class="a" style="left:0px;top:957px;width:275px;height:31px;background:#f0f0f0;"></div>
<div class="t" style="left:2.5px;top:959.89px;font-size:15px;color:#2f6fb0;letter-spacing:0.007px;text-decoration:underline;">Properties help</div>
<div class="a" style="left:186px;top:959px;width:83px;height:23px;background:#efefef;border:1px solid #d0d0d0;border-radius:3px"></div>
<div class="t" style="left:207.5px;top:964.29px;font-size:15px;color:#a8a8a8;letter-spacing:0.621px;">Apply</div>
<div class="a" style="left:275px;top:216px;width:2px;height:772px;background:#c6c6c6;"></div>
<div class="a" style="left:277px;top:216px;width:743px;height:2px;background:#c6c6c6;"></div>
<div class="a" style="left:277px;top:218px;width:743px;height:770px;background:#fff;"></div>
<div class="a" style="left:503px;top:218px;width:517px;height:25px;background:#cbcbcb;"></div>
<div class="t" style="left:312.2px;top:222.37px;font-size:15.5px;color:#3a3a3a;letter-spacing:-0.872px;font-weight:bold;">JULKISIVU KAAKKOON</div>
<div class="t" style="left:538.8px;top:223.29px;font-size:15px;color:#444;letter-spacing:-0.727px;">Ref. Level</div>
<div class="t" style="left:698px;top:223.29px;font-size:15px;color:#444;letter-spacing:-0.729px;">Level 1</div>
<svg style="left:0;top:0" width="1020" height="260"><path d="M283 231 L292.9 220 L302.7 231Z" fill="#5a5a5a"/><rect x="288" y="230.5" width="10.5" height="8.5" fill="#fff" stroke="#5a5a5a" stroke-width="1.8"/><path d="M484 224 L495 235 M495 224 L484 235" stroke="#6a6a6a" stroke-width="1.8"/><g fill="none" stroke="#9a9a9a" stroke-width="1"><rect x="509.5" y="221.5" width="11" height="15"/><rect x="516.5" y="226.5" width="12" height="13" fill="#cbcbcb"/></g><g fill="none" stroke="#9a9a9a" stroke-width="1"><rect x="669.5" y="221.5" width="11" height="15"/><rect x="676.5" y="226.5" width="12" height="13" fill="#cbcbcb"/></g></svg>
<div class="a" style="left:279px;top:964px;width:741px;height:21px;background:#f0f0f0;"></div>
<div class="a" style="left:279px;top:985px;width:741px;height:1px;background:#c4c4c4;"></div>
<div class="a" style="left:640px;top:964px;width:20px;height:21px;background:#e8e8e8;"></div>
<div class="a" style="left:660px;top:964px;width:1px;height:21px;background:#d2d2d2;"></div>
<div class="a" style="left:661px;top:964px;width:359px;height:21px;background:#e6e6e6;"></div>
<div class="t" style="left:306.4px;top:967.47px;font-size:13.5px;color:#3a3a3a;letter-spacing:-0.219px;">1 : 100</div>
<svg style="left:0;top:0" width="1020" height="1022"><rect x="375.5" y="968.5" width="19" height="13" fill="#ddd" stroke="#666" stroke-width="1.2"/><g fill="#888"><rect x="377" y="970" width="4" height="3"/><rect x="385" y="970" width="4" height="3"/><rect x="381" y="973" width="4" height="4"/><rect x="389" y="973" width="4" height="4"/><rect x="377" y="977" width="4" height="3"/><rect x="385" y="977" width="4" height="3"/></g><path d="M406.5 972 L410.5 967 L423.5 967 L423.5 979 L419.5 983.5 L406.5 983.5Z M406.5 972 L419.5 972 L419.5 983.5 M419.5 972 L423.5 967" fill="none" stroke="#666" stroke-width="1.2"/><circle cx="443" cy="973" r="6.5" fill="#e4e4e4" stroke="#aaa" stroke-width="1"/><rect x="447" y="972" width="8" height="8" rx="2" fill="#b8b8b8"/><rect x="435" y="980" width="14" height="3" rx="1.5" fill="#555"/><rect x="449" y="980" width="4" height="4" fill="#aaa"/><path d="M471.2 985 L471.2 971.2 L485 971.2" fill="none" stroke="#555" stroke-width="2.2"/><path d="M465 980 L468.5 980 M474 980 L480 980 L480 974 M480 965 L480 968.5" fill="none" stroke="#2f8fd5" stroke-width="1.9"/><path d="M501.2 985 L501.2 971.2 L513.5 971.2" fill="none" stroke="#555" stroke-width="2.2"/><path d="M495 979.5 L498.8 979.5 M508.8 965 L508.8 968.5" fill="none" stroke="#2f8fd5" stroke-width="1.9"/><circle cx="510.6" cy="977" r="4.6" fill="#5bc0c8"/><path d="M508.8 982 L512.4 982 L510.6 985Z" fill="#666"/><g fill="none" stroke="#666" stroke-width="1.5"><circle cx="530" cy="976" r="3.3"/><circle cx="538" cy="976" r="3.3"/><path d="M533.3 976 Q534 974 534.7 976 M526.7 976 L529 971 M541.3 976 L543 970.5"/></g><circle cx="565" cy="972.5" r="5.5" fill="#5bc0c8"/><rect x="562.5" y="977.5" width="5" height="4.5" fill="#666"/><g fill="none" stroke="#666" stroke-width="1.3"><path d="M588 969 L597 969 L597 972 M588 969 L588 979 L591 979"/><rect x="591" y="972" width="8" height="7"/><path d="M596 976 L603 976 L603 983 L596 983Z" stroke-dasharray="2 1.5"/></g><g fill="none" stroke="#666" stroke-width="1.3"><path d="M615.5 965 L615.5 981 M633.5 965 L633.5 972 M616 967.5 L633 967.5"/><path d="M616 978.5 L627 978.5" stroke-dasharray="2 2"/></g><circle cx="631" cy="975.5" r="4.5" fill="#5bc0c8"/><rect x="629.5" y="980" width="3" height="3" fill="#666"/><path d="M652.5 969.5 L647.3 974.5 L652.5 979.5" fill="none" stroke="#8a8a8a" stroke-width="2"/></svg>
<div class="a" style="left:0px;top:988px;width:1020px;height:1px;background:#c4c4c4;"></div>
<div class="a" style="left:0px;top:989px;width:1020px;height:31px;background:#f0f0f0;"></div>
<div class="a" style="left:0px;top:1020px;width:1020px;height:2px;background:#e0c8c8;"></div>
<div class="t" style="left:2.5px;top:997.69px;font-size:15px;color:#3a3a3a;letter-spacing:-0.360px;">Click to select, TAB for alternates, CTRL adds, SHIFT unselects.</div>
<div class="t" style="left:1002px;top:115.99px;font-size:15px;color:#3a3a3a;">Tex</div>
<svg style="left:0;top:0" width="1020" height="1022" shape-rendering="crispEdges"><defs><clipPath id="wall"><polygon points="369.4,585.5 511.5,503.4 634.4,574.4 634.4,728.2 369.4,728.2"/></clipPath><clipPath id="shd"><polygon points="389.4,574.0 511.5,503.4 634.4,574.4 634.4,584.0 610.6,571.5 605.7,575.9 538.3,530.5 397.4,610.2 397.4,728.2 389.4,728.2"/></clipPath></defs><polygon points="389.4,574.0 511.5,503.4 634.4,574.4 634.4,584.0 610.6,571.5 605.7,575.9 538.3,530.5 397.4,610.2 397.4,728.2 389.4,728.2" fill="#b3b3b3"/><polygon points="369.4,585.5 377.4,580.9 377.4,619.7 369.4,613" fill="#b3b3b3"/><polygon points="377.4,580.9 389.4,574.0 389.4,602 377.4,608" fill="#b3b3b3"/><g clip-path="url(#wall)" stroke="#d2d2d2" stroke-width="1"><line x1="399.4" y1="490" x2="399.4" y2="728"/><line x1="407.5" y1="490" x2="407.5" y2="728"/><line x1="415.6" y1="490" x2="415.6" y2="728"/><line x1="423.6" y1="490" x2="423.6" y2="728"/><line x1="431.7" y1="490" x2="431.7" y2="728"/><line x1="439.8" y1="490" x2="439.8" y2="728"/><line x1="447.9" y1="490" x2="447.9" y2="728"/><line x1="455.9" y1="490" x2="455.9" y2="728"/><line x1="464.0" y1="490" x2="464.0" y2="728"/><line x1="472.1" y1="490" x2="472.1" y2="728"/><line x1="480.1" y1="490" x2="480.1" y2="728"/><line x1="488.2" y1="490" x2="488.2" y2="728"/><line x1="496.3" y1="490" x2="496.3" y2="728"/><line x1="504.3" y1="490" x2="504.3" y2="728"/><line x1="512.4" y1="490" x2="512.4" y2="728"/><line x1="520.5" y1="490" x2="520.5" y2="728"/><line x1="528.5" y1="490" x2="528.5" y2="728"/><line x1="536.6" y1="490" x2="536.6" y2="728"/><line x1="544.7" y1="490" x2="544.7" y2="728"/><line x1="552.8" y1="490" x2="552.8" y2="728"/><line x1="560.8" y1="490" x2="560.8" y2="728"/><line x1="568.9" y1="490" x2="568.9" y2="728"/><line x1="577.0" y1="490" x2="577.0" y2="728"/><line x1="585.0" y1="490" x2="585.0" y2="728"/><line x1="593.1" y1="490" x2="593.1" y2="728"/><line x1="601.2" y1="490" x2="601.2" y2="728"/><line x1="609.2" y1="490" x2="609.2" y2="728"/><line x1="617.3" y1="490" x2="617.3" y2="728"/><line x1="625.4" y1="490" x2="625.4" y2="728"/></g><g clip-path="url(#shd)" stroke="#9a9a9a" stroke-width="1"><line x1="399.4" y1="490" x2="399.4" y2="728"/><line x1="407.5" y1="490" x2="407.5" y2="728"/><line x1="415.6" y1="490" x2="415.6" y2="728"/><line x1="423.6" y1="490" x2="423.6" y2="728"/><line x1="431.7" y1="490" x2="431.7" y2="728"/><line x1="439.8" y1="490" x2="439.8" y2="728"/><line x1="447.9" y1="490" x2="447.9" y2="728"/><line x1="455.9" y1="490" x2="455.9" y2="728"/><line x1="464.0" y1="490" x2="464.0" y2="728"/><line x1="472.1" y1="490" x2="472.1" y2="728"/><line x1="480.1" y1="490" x2="480.1" y2="728"/><line x1="488.2" y1="490" x2="488.2" y2="728"/><line x1="496.3" y1="490" x2="496.3" y2="728"/><line x1="504.3" y1="490" x2="504.3" y2="728"/><line x1="512.4" y1="490" x2="512.4" y2="728"/><line x1="520.5" y1="490" x2="520.5" y2="728"/><line x1="528.5" y1="490" x2="528.5" y2="728"/><line x1="536.6" y1="490" x2="536.6" y2="728"/><line x1="544.7" y1="490" x2="544.7" y2="728"/><line x1="552.8" y1="490" x2="552.8" y2="728"/><line x1="560.8" y1="490" x2="560.8" y2="728"/><line x1="568.9" y1="490" x2="568.9" y2="728"/><line x1="577.0" y1="490" x2="577.0" y2="728"/><line x1="585.0" y1="490" x2="585.0" y2="728"/><line x1="593.1" y1="490" x2="593.1" y2="728"/><line x1="601.2" y1="490" x2="601.2" y2="728"/><line x1="609.2" y1="490" x2="609.2" y2="728"/><line x1="617.3" y1="490" x2="617.3" y2="728"/><line x1="625.4" y1="490" x2="625.4" y2="728"/></g><polygon points="645.5,580.9 653.4,585.4 653.4,728.2 645.5,728.2" fill="#b3b3b3"/><g stroke="#111" stroke-width="1"><line x1="369.4" y1="585.5" x2="369.4" y2="728.2"/><line x1="377.4" y1="580.9" x2="377.4" y2="728.2"/><line x1="389.4" y1="574.0" x2="389.4" y2="728.2"/><line x1="634.4" y1="574.4" x2="634.4" y2="728.2"/><line x1="645.5" y1="580.9" x2="645.5" y2="728.2"/><line x1="653.4" y1="585.4" x2="653.4" y2="728.2"/><line x1="369.4" y1="728.2" x2="653.4" y2="728.2"/></g><g fill="#fff" stroke="#111" stroke-width="1"><rect x="427" y="549.5" width="6" height="9.5" fill="#b3b3b3"/><rect x="508.5" y="503.5" width="6.5" height="10" fill="#b3b3b3"/><rect x="589.5" y="550" width="5.5" height="9.5"/></g><polygon points="350.5,588.8 511.5,496.5 672.9,589.4 672.9,594 670.6,595.3 511.5,503.4 352.6,595.2 350.5,595.2" fill="#fff" stroke="#111" stroke-width="1" stroke-linejoin="miter"/><g stroke="#111" stroke-width="1"><line x1="350.3" y1="581.5" x2="477.5" y2="508.5"/><line x1="350.3" y1="585.3" x2="477.5" y2="512.3"/><line x1="350.3" y1="581.5" x2="351.8" y2="584.5"/><line x1="477.5" y1="508.5" x2="479.0" y2="511.5"/><line x1="368.1" y1="570.8" x2="369.1" y2="576.7"/><line x1="378.3" y1="565.0" x2="379.3" y2="570.9"/><line x1="396.1" y1="554.7" x2="397.1" y2="560.7"/><line x1="413.9" y1="544.5" x2="414.9" y2="550.4"/><line x1="431.7" y1="534.3" x2="432.7" y2="540.2"/><line x1="449.5" y1="524.1" x2="450.5" y2="530.0"/><line x1="455.9" y1="520.4" x2="456.9" y2="526.4"/></g><g stroke="#111" fill="none"><line x1="425.2" y1="465.5" x2="425.2" y2="539.5" stroke-width="1"/><line x1="469.6" y1="465.5" x2="469.6" y2="514.5" stroke-width="1"/><line x1="423.3" y1="461.3" x2="472" y2="461.3" stroke-width="2.2"/><line x1="423.3" y1="465.6" x2="472" y2="465.6" stroke-width="1"/></g><path d="M343.7 721.5 L343.7 555 A10.85 10.85 0 0 1 365.4 555 L365.4 571.2 L362.5 571.2 L362.5 555 A7.45 7.45 0 0 0 347.6 555 L347.6 721.5Z" fill="#fff" stroke="#111" stroke-width="1"/><rect x="347.6" y="595.3" width="21.8" height="3" fill="#d0d0d0" stroke="#111" stroke-width="1"/><rect x="347.6" y="703.9" width="21.8" height="1.8" fill="#fff" stroke="#111" stroke-width="1"/><g fill="#fff" stroke="#111" stroke-width="1"><rect x="479.4" y="601.4" width="5.5" height="109.9"/><rect x="538.3" y="601.4" width="5.5" height="109.9"/><rect x="476.2" y="596.2" width="70.6" height="5.2"/><rect x="484.9" y="601.7" width="53.1" height="98.1"/><rect x="486.6" y="603.5" width="49.9" height="94.9"/><rect x="489.4" y="606.2" width="45.2" height="20.2"/><line x1="486.6" y1="629.1" x2="536.5" y2="629.1"/><rect x="489.4" y="631.6" width="21.1" height="63.7"/><rect x="512.3" y="631.6" width="22.3" height="63.7"/><rect x="484.9" y="700.8" width="53.1" height="3.7"/><rect x="484.9" y="704.5" width="53.1" height="3.8"/></g><rect x="653.4" y="589.7" width="95" height="23.4" fill="#fff" stroke="#111" stroke-width="1"/><polygon points="654,590.3 674,590.3 697,612.5 654,612.5" fill="#b3b3b3"/><g stroke="#d2d2d2"><line x1="691.7" y1="590.5" x2="691.7" y2="607"/><line x1="712.5" y1="590.5" x2="712.5" y2="607"/><line x1="734.8" y1="590.5" x2="734.8" y2="607"/></g><line x1="669.6" y1="590.5" x2="669.6" y2="607" stroke="#9a9a9a"/><line x1="653.4" y1="607.3" x2="748.4" y2="607.3" stroke="#111" stroke-width="1"/><rect x="653.4" y="589.7" width="95" height="23.4" fill="none" stroke="#111" stroke-width="1"/><polygon points="655,580 672.9,589.4 672.9,594 670.6,595.3 655,586.3" fill="#fff" stroke="none"/><polyline points="653.4,585.3 672.9,589.4" fill="none" stroke="none"/><path d="M645.0 573.1 L672.9 589.4 L672.9 594 L670.6 595.3 L645.0 580.6" fill="none" stroke="#111" stroke-width="1"/><rect x="715.5" y="613.1" width="5.2" height="108.8" fill="#fff" stroke="#111" stroke-width="1"/><polygon points="716.2,626 720.1,633 720.1,721.3 716.2,721.3" fill="#b3b3b3"/><polygon points="645,728.2 653.4,728.2 653.4,722.4 731.3,722.4 731.3,730.7 747.7,730.7 747.7,738.2 763.6,738.2 763.6,745.3 779.8,745.3 779.8,750.5 753.3,750.5 713.7,732.4 645,732.4" fill="#b3b3b3" stroke="#111" stroke-width="1"/><line x1="653.4" y1="724.8" x2="731.3" y2="724.8" stroke="#111" stroke-width="1"/><path d="M731.3 731.2 L747.7 731.2 M747.7 738.7 L763.6 738.7 M763.6 745.8 L779.8 745.8" stroke="#111" stroke-width="2"/><polygon points="645,732.4 713.7,732.4 753.3,750.5 645,750.5" fill="#fff"/><path d="M645 750 L645 732.4 L713.7 732.4 L753.3 750.5" fill="none" stroke="#111" stroke-width="1"/><rect x="379.4" y="728.2" width="265.6" height="20.2" fill="#fff"/><path d="M379.4 748.4 L379.4 728.2 L645 728.2 L645 749.5" fill="none" stroke="#111" stroke-width="1"/><polygon points="380,728.8 397.6,728.8 397.6,737.6 389,737.6 380,731" fill="#b3b3b3"/><polygon points="634.4,728.8 645,728.8 645,738 641,738" fill="#b3b3b3"/><path d="M380.9 739.7 L386.8 740.7 L390.7 739.7 L393.7 737.8 L410.4 738.8 L412.3 738.3 L416.2 741.2 L423.1 738.8 L426.0 735.8 L423.1 732.9 L418.2 730.9 L416.7 729.0 M388.8 740.7 L387.8 746.6 M416.2 741.2 L411.3 746.6 M423.1 738.8 L432.9 745.6 L446.6 745.1 L452.5 742.7 L452.5 734.8 L459.4 732.9 L478.0 731.9 M426.0 735.8 L451.5 735.8 M419.2 733.4 L436.8 733.4 L439.8 729.9 M439.8 729.9 L439.3 733.9 M452.5 742.7 L478.0 742.7 M464.3 743.7 L463.3 747.6 M466.2 730.9 L474.9 731.4 L484.7 738.8 L491.6 739.7 L499.4 740.7 L502.4 739.3 L499.4 735.8 L498.4 730.9 M479.8 731.4 L498.4 731.4 M478.0 742.7 L479.8 741.7 L484.7 739.7 M484.7 740.7 L483.7 746.6 M499.4 740.7 L498.4 746.6 M502.4 739.3 L520.0 739.3 L523.9 740.7 L521.0 746.6 M523.9 740.7 L532.7 738.8 L534.7 736.8 L528.8 732.9 L526.9 729.9 M529.8 733.9 L568.0 732.9 M548.4 729.9 L548.4 733.9 M532.7 738.8 L543.5 745.6 L558.2 744.6 L561.2 740.7 L561.2 735.8 L564.1 732.9 M561.2 741.7 L594.4 741.7 L593.4 747.6 M562.0 732.9 L574.7 731.4 L585.5 731.4 L594.4 738.8 L607.1 739.7 L608.1 734.8 L607.1 730.9 M588.5 731.4 L607.1 730.9 M608.1 734.8 L612.0 738.8 L630.6 739.3 L633.6 740.7 L638.5 739.7 L644.0 741.7 M574.7 743.7 L572.8 747.6 M607.1 741.7 L607.1 746.6 L628.7 747.6 L632.6 741.7 L633.6 740.7 M381.0 744.5 L395.0 744.0" fill="none" stroke="#d6d6d6" stroke-width="1"/><polyline points="279,753.3 291.7,753.3 307.4,755.3 326,755.3 351.5,751.4 379.4,748.2 383,747 402.5,747 403.5,748.4 645,749.5 704,749.5 704,750.5 780,750.5 804.3,751.5 904.3,752.5 1014,753.5" fill="none" stroke="#111" stroke-width="1"/></svg>
</body></html>
